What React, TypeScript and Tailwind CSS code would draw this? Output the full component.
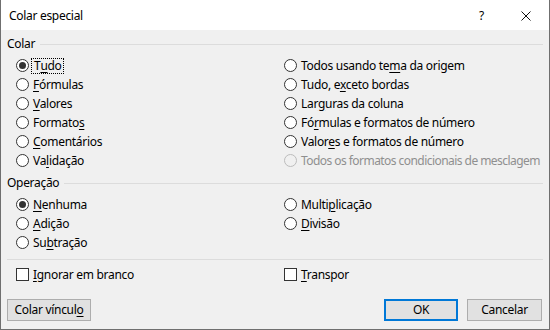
import React from "react";

const Radio = ({ checked, disabled }: { checked?: boolean; disabled?: boolean }) => (
  <span
    className={`w-[13px] h-[13px] shrink-0 rounded-full border flex items-center justify-center ${
      disabled ? "border-[#bcbcbc] bg-[#f0f0f0]" : "border-[#333333] bg-white"
    }`}
  >
    {checked && <span className="w-[7px] h-[7px] rounded-full bg-[#333333]" />}
  </span>
);

const Check = () => (
  <span className="w-[13px] h-[13px] shrink-0 border border-[#333333] bg-white" />
);

const U = ({ children }: { children: React.ReactNode }) => (
  <span className="underline underline-offset-[2px] decoration-1">{children}</span>
);

const Row = ({
  children,
  checked,
  disabled,
  focus,
  box,
}: {
  children: React.ReactNode;
  checked?: boolean;
  disabled?: boolean;
  focus?: boolean;
  box?: boolean;
}) => (
  <div
    className={`h-[19px] flex items-center ${
      disabled ? "text-[#8f8f8f] tracking-[-0.55px]" : "text-black"
    }`}
  >
    {box ? <Check /> : <Radio checked={checked} disabled={disabled} />}
    {focus ? (
      <span className="ml-[2px] pl-[2px] pr-[1px] h-[16px] flex items-center border border-dotted border-black leading-[14px]">
        {children}
      </span>
    ) : (
      <span className="ml-[4px] leading-[16px] whitespace-nowrap">{children}</span>
    )}
  </div>
);

const Header = ({ label }: { label: string }) => (
  <div className="h-[16px] flex items-center">
    <span className="leading-[16px]">{label}</span>
    <span className="ml-[5px] flex-1 h-px bg-[#dcdcdc]" />
  </div>
);

export default function App() {
  return (
    <div
      className="w-[550px] h-[330px] flex flex-col bg-[#f0f0f0] border-l border-r border-b border-[#6f6f6f] text-[12px] tracking-[-0.3px] text-black"
      style={{ fontFamily: '"Noto Sans", "Segoe UI", sans-serif' }}
    >
      <div className="h-[30px] bg-white flex items-center shrink-0">
        <span className="ml-[8px] text-[12px] leading-[16px] mt-[1px]">Colar especial</span>
        <span className="ml-auto mr-[37px] text-[12px] leading-[16px] mt-[1px]">?</span>
        <svg width="10" height="10" viewBox="0 0 10 10" className="mr-[18px] mt-[1px]">
          <path d="M0.5 0.5 L9.5 9.5 M9.5 0.5 L0.5 9.5" stroke="#111" strokeWidth="1" />
        </svg>
      </div>
      <div className="flex flex-col flex-1 pl-[6px] pr-[6px]">
        <div className="mt-[6px]">
          <Header label="Colar" />
        </div>
        <div className="mt-[4px] pl-[9px] grid grid-cols-[268px_1fr]">
          <div className="flex flex-col">
            <Row checked focus>
              T<U>u</U>do
            </Row>
            <Row>
              <U>F</U>órmulas
            </Row>
            <Row>
              <U>V</U>alores
            </Row>
            <Row>
              Formato<U>s</U>
            </Row>
            <Row>
              <U>C</U>omentários
            </Row>
            <Row>
              Va<U>l</U>idação
            </Row>
          </div>
          <div className="flex flex-col">
            <Row>
              Todos usando te<U>m</U>a da origem
            </Row>
            <Row>
              Tudo, e<U>x</U>ceto bordas
            </Row>
            <Row>
              Lar<U>g</U>uras da coluna
            </Row>
            <Row>
              Fó<U>r</U>mulas e formatos de número
            </Row>
            <Row>
              Valor<U>e</U>s e formatos de número
            </Row>
            <Row disabled>Todos os formatos condicionais de mesclagem</Row>
          </div>
        </div>
        <div className="mt-[5px]">
          <Header label="Operação" />
        </div>
        <div className="mt-[4px] pl-[9px] grid grid-cols-[268px_1fr]">
          <div className="flex flex-col">
            <Row checked>
              <U>N</U>enhuma
            </Row>
            <Row>
              <U>A</U>dição
            </Row>
            <Row>
              Su<U>b</U>tração
            </Row>
          </div>
          <div className="flex flex-col">
            <Row>
              Multi<U>p</U>licação
            </Row>
            <Row>
              <U>D</U>ivisão
            </Row>
          </div>
        </div>
        <div className="mt-[7px] h-px bg-[#dcdcdc]" />
        <div className="mt-[5px] pl-[9px] grid grid-cols-[268px_1fr]">
          <Row box>
            <U>I</U>gnorar em branco
          </Row>
          <Row box>
            <U>T</U>ranspor
          </Row>
        </div>
        <div className="mt-[15px] flex items-center">
          <button className="w-[84px] h-[22px] bg-[#e1e1e1] border border-[#adadad] flex items-center justify-center leading-[16px]">
            Colar víncul<U>o</U>
          </button>
          <button className="ml-auto w-[74px] h-[22px] bg-[#e1e1e1] border-2 border-[#0078d7] flex items-center justify-center leading-[16px]">
            OK
          </button>
          <button className="ml-[9px] mr-[1px] w-[75px] h-[22px] bg-[#e1e1e1] border border-[#adadad] flex items-center justify-center leading-[16px]">
            Cancelar
          </button>
        </div>
      </div>
    </div>
  );
}
